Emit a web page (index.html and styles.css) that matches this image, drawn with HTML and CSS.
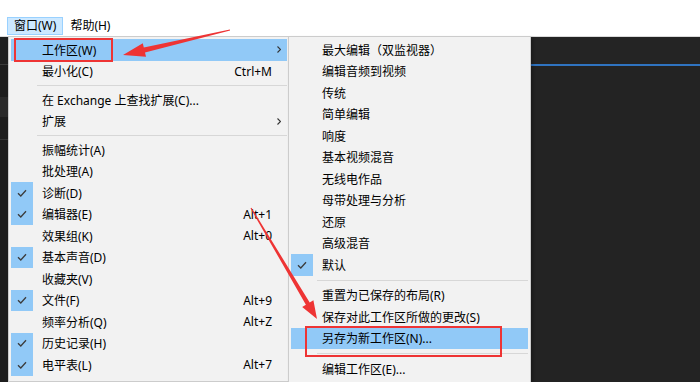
FILE: index.html
```html
<!DOCTYPE html>
<html lang="zh-CN">

<head>
    <meta charset="UTF-8">
    <meta name="viewport" content="width=device-width, initial-scale=1.0">
    <title>窗口 - 工作区</title>
    <link rel="stylesheet" href="styles.css">
</head>

<body>
    <!-- 菜单栏 -->
    <div id="menubar">
        <span class="top-item active">窗口(W)</span>
        <span class="top-item">帮助(H)</span>
    </div>

    <!-- 后面的深色程序界面 -->
    <div id="app">
        <div class="panel-left">
            <div class="panel-head"></div>
            <div class="band"></div>
            <div class="band line"></div>
        </div>
        <div class="panel-right">
            <div class="panel-head blue"></div>
        </div>
    </div>

    <!-- 窗口菜单 -->
    <div class="menu" id="mainMenu">
        <div class="item hover"><span class="check"></span><span class="label">工作区(W)</span><span class="more"><svg width="4" height="7" viewBox="0 0 4 7"><path d="M0.5 0.5 L3.5 3.5 L0.5 6.5" /></svg></span></div>
        <div class="item"><span class="check"></span><span class="label">最小化(C)</span><span class="key">Ctrl+M</span><span class="more"></span></div>
        <div class="sep"></div>
        <div class="item"><span class="check"></span><span class="label">在 Exchange 上查找扩展(C)...</span><span class="more"></span></div>
        <div class="item"><span class="check"></span><span class="label">扩展</span><span class="more"><svg width="4" height="7" viewBox="0 0 4 7"><path d="M0.5 0.5 L3.5 3.5 L0.5 6.5" /></svg></span></div>
        <div class="sep"></div>
        <div class="item"><span class="check"></span><span class="label">振幅统计(A)</span><span class="more"></span></div>
        <div class="item"><span class="check"></span><span class="label">批处理(A)</span><span class="more"></span></div>
        <div class="item"><span class="check on"><svg width="10" height="8" viewBox="0 0 10 8"><path d="M1 4.2 L3.8 7 L9 1.2" /></svg></span><span class="label">诊断(D)</span><span class="more"></span></div>
        <div class="item"><span class="check on"><svg width="10" height="8" viewBox="0 0 10 8"><path d="M1 4.2 L3.8 7 L9 1.2" /></svg></span><span class="label">编辑器(E)</span><span class="key">Alt+1</span><span class="more"></span></div>
        <div class="item"><span class="check"></span><span class="label">效果组(K)</span><span class="key">Alt+0</span><span class="more"></span></div>
        <div class="item"><span class="check on"><svg width="10" height="8" viewBox="0 0 10 8"><path d="M1 4.2 L3.8 7 L9 1.2" /></svg></span><span class="label">基本声音(D)</span><span class="more"></span></div>
        <div class="item"><span class="check"></span><span class="label">收藏夹(V)</span><span class="more"></span></div>
        <div class="item"><span class="check on"><svg width="10" height="8" viewBox="0 0 10 8"><path d="M1 4.2 L3.8 7 L9 1.2" /></svg></span><span class="label">文件(F)</span><span class="key">Alt+9</span><span class="more"></span></div>
        <div class="item"><span class="check"></span><span class="label">频率分析(Q)</span><span class="key">Alt+Z</span><span class="more"></span></div>
        <div class="item"><span class="check on"><svg width="10" height="8" viewBox="0 0 10 8"><path d="M1 4.2 L3.8 7 L9 1.2" /></svg></span><span class="label">历史记录(H)</span><span class="more"></span></div>
        <div class="item"><span class="check on"><svg width="10" height="8" viewBox="0 0 10 8"><path d="M1 4.2 L3.8 7 L9 1.2" /></svg></span><span class="label">电平表(L)</span><span class="key">Alt+7</span><span class="more"></span></div>
    </div>

    <!-- 工作区子菜单 -->
    <div class="menu" id="subMenu">
        <div class="item"><span class="check"></span><span class="label">最大编辑（双监视器）</span></div>
        <div class="item"><span class="check"></span><span class="label">编辑音频到视频</span></div>
        <div class="item"><span class="check"></span><span class="label">传统</span></div>
        <div class="item"><span class="check"></span><span class="label">简单编辑</span></div>
        <div class="item"><span class="check"></span><span class="label">响度</span></div>
        <div class="item"><span class="check"></span><span class="label">基本视频混音</span></div>
        <div class="item"><span class="check"></span><span class="label">无线电作品</span></div>
        <div class="item"><span class="check"></span><span class="label">母带处理与分析</span></div>
        <div class="item"><span class="check"></span><span class="label">还原</span></div>
        <div class="item"><span class="check"></span><span class="label">高级混音</span></div>
        <div class="item"><span class="check on"><svg width="10" height="8" viewBox="0 0 10 8"><path d="M1 4.2 L3.8 7 L9 1.2" /></svg></span><span class="label">默认</span></div>
        <div class="sep"></div>
        <div class="item"><span class="check"></span><span class="label">重置为已保存的布局(R)</span></div>
        <div class="item"><span class="check"></span><span class="label">保存对此工作区所做的更改(S)</span></div>
        <div class="item hover"><span class="check"></span><span class="label">另存为新工作区(N)...</span></div>
        <div class="sep"></div>
        <div class="item"><span class="check"></span><span class="label">编辑工作区(E)...</span></div>
    </div>

    <!-- 红色标注 -->
    <svg id="marks" width="700" height="382" viewBox="0 0 700 382">
        <rect x="15" y="39" width="97" height="22" />
        <rect x="306" y="327" width="195" height="29" />
        <polygon class="arrow" points="229.9,29.4 143.8,47.6 142.8,43.2 123,55 146,56.8 145,52.4 230.1,30.6" />
        <polygon class="arrow" points="251.5,207.7 309.7,302.5 313.4,300.3 317,319 302.2,306.9 305.9,304.7 250.5,208.3" />
    </svg>
</body>

</html>
```

FILE: styles.css
```css
body {
    margin: 0;
    width: 700px;
    height: 382px;
    overflow: hidden;
    position: relative;
    background: #fff;
    font-family: "Noto Sans", "Noto Sans CJK SC", sans-serif;
    font-size: 12px;
    color: #000;
}

#menubar {
    height: 36px;
    box-sizing: border-box;
    padding: 17px 0 0 7px;
    display: flex;
}

.top-item {
    height: 18px;
    box-sizing: border-box;
    padding: 0 6px;
    line-height: 16px;
    border: 1px solid transparent;
}

.top-item.active {
    background: #cce8ff;
    border-color: #99d1ff;
}

#app {
    height: 346px;
    border-top: 1px solid #dadada;
    background: #1d1d1d;
    display: flex;
}

.panel-left {
    width: 300px;
}

.panel-right {
    flex: 1;
    background: #232323;
}

.panel-head {
    height: 27px;
    border-bottom: 1px solid #3a3a3a;
    background: #1f1f1f;
}

.panel-head.blue {
    height: 27px;
    background: #242424;
    border-bottom: 2px solid #2f73c0;
}

.band {
    height: 20px;
    margin-top: 32px;
    background: #2a2a2a;
}

.band.line {
    height: 1px;
    margin-top: 22px;
    background: #333;
}

.menu {
    position: absolute;
    top: 36px;
    box-sizing: border-box;
    background: #f2f2f2;
    border: 1px solid #cccccc;
    padding: 2px 0;
}

#mainMenu {
    left: 8px;
    width: 282px;
    height: 346px;
}

#subMenu {
    left: 288px;
    width: 243px;
    box-shadow: 2px 2px 3px rgba(0, 0, 0, 0.25);
}

.item {
    height: 21.5px;
    margin: 0 2px;
    display: flex;
    align-items: center;
    white-space: nowrap;
}

.item.hover {
    background: #91c9f7;
}

.check {
    width: 22px;
    height: 100%;
    display: flex;
    align-items: center;
    justify-content: center;
}

.check.on {
    background: #91c9f7;
}

.check path {
    fill: none;
    stroke: #3c3c3c;
    stroke-width: 1.3;
}

.label {
    flex: 1;
    padding-left: 9px;
}

.key {
    text-align: right;
}

.more {
    width: 15px;
    height: 100%;
    display: flex;
    align-items: center;
    padding-left: 5px;
    box-sizing: border-box;
}

.more path {
    fill: none;
    stroke: #333;
    stroke-width: 1.1;
}

.sep {
    height: 7px;
    margin: 0 2px 0 28px;
    display: flex;
    align-items: center;
}

#subMenu .sep {
    height: 9px;
}

.sep::after {
    content: "";
    flex: 1;
    height: 1px;
    background: #d7d7d7;
}

#marks {
    position: absolute;
    left: 0;
    top: 0;
}

#marks rect {
    fill: none;
    stroke: #ee3434;
    stroke-width: 2;
}

#marks .arrow {
    fill: #ee3434;
}
```
